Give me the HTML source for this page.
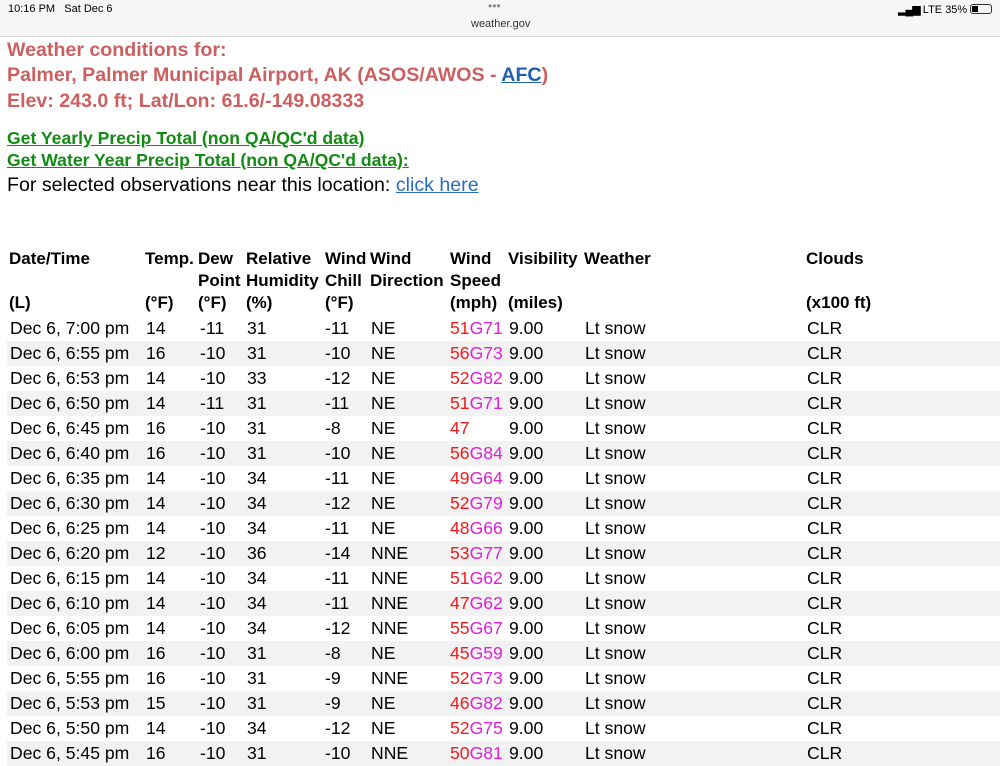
<!DOCTYPE html>
<html><head><meta charset="utf-8"><style>
*{margin:0;padding:0;box-sizing:border-box}
body{width:1000px;height:750px;overflow:hidden;background:#fff;font-family:"Liberation Sans",Arial,sans-serif;position:relative;color:#000}
.sb{position:absolute;left:0;top:0;width:1000px;height:37px;background:#f6f6f6;border-bottom:1px solid #d4d4d4}
.a{position:absolute;white-space:nowrap}
.t{color:#cc5f5f;font-weight:bold;font-size:19.6px;left:7px}
.g{color:#138a13;font-weight:bold;font-size:17.6px;left:7px;text-decoration:underline}
.h{font-weight:bold;font-size:17px}
.r{position:absolute;left:7px;width:993px;height:25px;font-size:17.6px}
.r.s{background:#f2f2f2}
.r span{position:absolute;top:2px;white-space:nowrap}
.red{color:#f01a1a}.mag{color:#e020d8}
b{font-weight:normal}i{font-style:normal}
</style></head><body>
<div class="sb"></div>
<div class="a" style="left:8px;top:3px;font-size:11px">10:16 PM&nbsp;&nbsp; Sat Dec 6</div>
<div class="a" style="left:488px;top:-1px;font-size:12px;color:#888">•••</div>
<div class="a" style="left:471px;top:18px;font-size:11px;color:#333">weather.gov</div>
<div class="a" style="left:898px;top:3px;font-size:11px"><span style="letter-spacing:-1px">▂▄▆</span> LTE 35% <span style="display:inline-block;width:22px;height:10px;border:1px solid #333;border-radius:3px;vertical-align:-1px;position:relative"><span style="position:absolute;left:1px;top:1px;width:6px;height:6px;background:#000"></span></span></div>

<div class="a t" style="top:39px">Weather conditions for:</div>
<div class="a t" style="top:64px">Palmer, Palmer Municipal Airport, AK (ASOS/AWOS - <span style="color:#1f5fb0;text-decoration:underline">AFC</span>)</div>
<div class="a t" style="top:90px">Elev: 243.0 ft; Lat/Lon: 61.6/-149.08333</div>
<div class="a g" style="top:128px">Get Yearly Precip Total (non QA/QC'd data)</div>
<div class="a g" style="top:150px">Get Water Year Precip Total (non QA/QC'd data):</div>
<div class="a" style="left:7px;top:174px;font-size:19.6px">For selected observations near this location: <span style="color:#2a6bc4;text-decoration:underline">click here</span></div>

<div class="a h" style="left:9px;top:249px">Date/Time</div>
<div class="a h" style="left:145px;top:249px">Temp.</div>
<div class="a h" style="left:198px;top:249px">Dew</div>
<div class="a h" style="left:246px;top:249px">Relative</div>
<div class="a h" style="left:325px;top:249px">Wind</div>
<div class="a h" style="left:370px;top:249px">Wind</div>
<div class="a h" style="left:450px;top:249px">Wind</div>
<div class="a h" style="left:508px;top:249px">Visibility</div>
<div class="a h" style="left:584px;top:249px">Weather</div>
<div class="a h" style="left:806px;top:249px">Clouds</div>
<div class="a h" style="left:198px;top:271px">Point</div>
<div class="a h" style="left:246px;top:271px">Humidity</div>
<div class="a h" style="left:325px;top:271px">Chill</div>
<div class="a h" style="left:370px;top:271px">Direction</div>
<div class="a h" style="left:450px;top:271px">Speed</div>
<div class="a h" style="left:9px;top:293px">(L)</div>
<div class="a h" style="left:145px;top:293px">(°F)</div>
<div class="a h" style="left:198px;top:293px">(°F)</div>
<div class="a h" style="left:246px;top:293px">(%)</div>
<div class="a h" style="left:325px;top:293px">(°F)</div>
<div class="a h" style="left:450px;top:293px">(mph)</div>
<div class="a h" style="left:508px;top:293px">(miles)</div>
<div class="a h" style="left:806px;top:293px">(x100 ft)</div>

<div class="r" style="top:316px"><span style="left:3px">Dec 6, 7:00 pm</span><span style="left:139px">14</span><span style="left:193px">-11</span><span style="left:240px">31</span><span style="left:318px">-11</span><span style="left:364px">NE</span><span style="left:443px"><b class="red">51</b><i class="mag">G71</i></span><span style="left:502px">9.00</span><span style="left:578px">Lt snow</span><span style="left:800px">CLR</span></div>
<div class="r s" style="top:341px"><span style="left:3px">Dec 6, 6:55 pm</span><span style="left:139px">16</span><span style="left:193px">-10</span><span style="left:240px">31</span><span style="left:318px">-10</span><span style="left:364px">NE</span><span style="left:443px"><b class="red">56</b><i class="mag">G73</i></span><span style="left:502px">9.00</span><span style="left:578px">Lt snow</span><span style="left:800px">CLR</span></div>
<div class="r" style="top:366px"><span style="left:3px">Dec 6, 6:53 pm</span><span style="left:139px">14</span><span style="left:193px">-10</span><span style="left:240px">33</span><span style="left:318px">-12</span><span style="left:364px">NE</span><span style="left:443px"><b class="red">52</b><i class="mag">G82</i></span><span style="left:502px">9.00</span><span style="left:578px">Lt snow</span><span style="left:800px">CLR</span></div>
<div class="r s" style="top:391px"><span style="left:3px">Dec 6, 6:50 pm</span><span style="left:139px">14</span><span style="left:193px">-11</span><span style="left:240px">31</span><span style="left:318px">-11</span><span style="left:364px">NE</span><span style="left:443px"><b class="red">51</b><i class="mag">G71</i></span><span style="left:502px">9.00</span><span style="left:578px">Lt snow</span><span style="left:800px">CLR</span></div>
<div class="r" style="top:416px"><span style="left:3px">Dec 6, 6:45 pm</span><span style="left:139px">16</span><span style="left:193px">-10</span><span style="left:240px">31</span><span style="left:318px">-8</span><span style="left:364px">NE</span><span style="left:443px"><b class="red">47</b></span><span style="left:502px">9.00</span><span style="left:578px">Lt snow</span><span style="left:800px">CLR</span></div>
<div class="r s" style="top:441px"><span style="left:3px">Dec 6, 6:40 pm</span><span style="left:139px">16</span><span style="left:193px">-10</span><span style="left:240px">31</span><span style="left:318px">-10</span><span style="left:364px">NE</span><span style="left:443px"><b class="red">56</b><i class="mag">G84</i></span><span style="left:502px">9.00</span><span style="left:578px">Lt snow</span><span style="left:800px">CLR</span></div>
<div class="r" style="top:466px"><span style="left:3px">Dec 6, 6:35 pm</span><span style="left:139px">14</span><span style="left:193px">-10</span><span style="left:240px">34</span><span style="left:318px">-11</span><span style="left:364px">NE</span><span style="left:443px"><b class="red">49</b><i class="mag">G64</i></span><span style="left:502px">9.00</span><span style="left:578px">Lt snow</span><span style="left:800px">CLR</span></div>
<div class="r s" style="top:491px"><span style="left:3px">Dec 6, 6:30 pm</span><span style="left:139px">14</span><span style="left:193px">-10</span><span style="left:240px">34</span><span style="left:318px">-12</span><span style="left:364px">NE</span><span style="left:443px"><b class="red">52</b><i class="mag">G79</i></span><span style="left:502px">9.00</span><span style="left:578px">Lt snow</span><span style="left:800px">CLR</span></div>
<div class="r" style="top:516px"><span style="left:3px">Dec 6, 6:25 pm</span><span style="left:139px">14</span><span style="left:193px">-10</span><span style="left:240px">34</span><span style="left:318px">-11</span><span style="left:364px">NE</span><span style="left:443px"><b class="red">48</b><i class="mag">G66</i></span><span style="left:502px">9.00</span><span style="left:578px">Lt snow</span><span style="left:800px">CLR</span></div>
<div class="r s" style="top:541px"><span style="left:3px">Dec 6, 6:20 pm</span><span style="left:139px">12</span><span style="left:193px">-10</span><span style="left:240px">36</span><span style="left:318px">-14</span><span style="left:364px">NNE</span><span style="left:443px"><b class="red">53</b><i class="mag">G77</i></span><span style="left:502px">9.00</span><span style="left:578px">Lt snow</span><span style="left:800px">CLR</span></div>
<div class="r" style="top:566px"><span style="left:3px">Dec 6, 6:15 pm</span><span style="left:139px">14</span><span style="left:193px">-10</span><span style="left:240px">34</span><span style="left:318px">-11</span><span style="left:364px">NNE</span><span style="left:443px"><b class="red">51</b><i class="mag">G62</i></span><span style="left:502px">9.00</span><span style="left:578px">Lt snow</span><span style="left:800px">CLR</span></div>
<div class="r s" style="top:591px"><span style="left:3px">Dec 6, 6:10 pm</span><span style="left:139px">14</span><span style="left:193px">-10</span><span style="left:240px">34</span><span style="left:318px">-11</span><span style="left:364px">NNE</span><span style="left:443px"><b class="red">47</b><i class="mag">G62</i></span><span style="left:502px">9.00</span><span style="left:578px">Lt snow</span><span style="left:800px">CLR</span></div>
<div class="r" style="top:616px"><span style="left:3px">Dec 6, 6:05 pm</span><span style="left:139px">14</span><span style="left:193px">-10</span><span style="left:240px">34</span><span style="left:318px">-12</span><span style="left:364px">NNE</span><span style="left:443px"><b class="red">55</b><i class="mag">G67</i></span><span style="left:502px">9.00</span><span style="left:578px">Lt snow</span><span style="left:800px">CLR</span></div>
<div class="r s" style="top:641px"><span style="left:3px">Dec 6, 6:00 pm</span><span style="left:139px">16</span><span style="left:193px">-10</span><span style="left:240px">31</span><span style="left:318px">-8</span><span style="left:364px">NE</span><span style="left:443px"><b class="red">45</b><i class="mag">G59</i></span><span style="left:502px">9.00</span><span style="left:578px">Lt snow</span><span style="left:800px">CLR</span></div>
<div class="r" style="top:666px"><span style="left:3px">Dec 6, 5:55 pm</span><span style="left:139px">16</span><span style="left:193px">-10</span><span style="left:240px">31</span><span style="left:318px">-9</span><span style="left:364px">NNE</span><span style="left:443px"><b class="red">52</b><i class="mag">G73</i></span><span style="left:502px">9.00</span><span style="left:578px">Lt snow</span><span style="left:800px">CLR</span></div>
<div class="r s" style="top:691px"><span style="left:3px">Dec 6, 5:53 pm</span><span style="left:139px">15</span><span style="left:193px">-10</span><span style="left:240px">31</span><span style="left:318px">-9</span><span style="left:364px">NE</span><span style="left:443px"><b class="red">46</b><i class="mag">G82</i></span><span style="left:502px">9.00</span><span style="left:578px">Lt snow</span><span style="left:800px">CLR</span></div>
<div class="r" style="top:716px"><span style="left:3px">Dec 6, 5:50 pm</span><span style="left:139px">14</span><span style="left:193px">-10</span><span style="left:240px">34</span><span style="left:318px">-12</span><span style="left:364px">NE</span><span style="left:443px"><b class="red">52</b><i class="mag">G75</i></span><span style="left:502px">9.00</span><span style="left:578px">Lt snow</span><span style="left:800px">CLR</span></div>
<div class="r s" style="top:741px"><span style="left:3px">Dec 6, 5:45 pm</span><span style="left:139px">16</span><span style="left:193px">-10</span><span style="left:240px">31</span><span style="left:318px">-10</span><span style="left:364px">NNE</span><span style="left:443px"><b class="red">50</b><i class="mag">G81</i></span><span style="left:502px">9.00</span><span style="left:578px">Lt snow</span><span style="left:800px">CLR</span></div>
</body></html>
